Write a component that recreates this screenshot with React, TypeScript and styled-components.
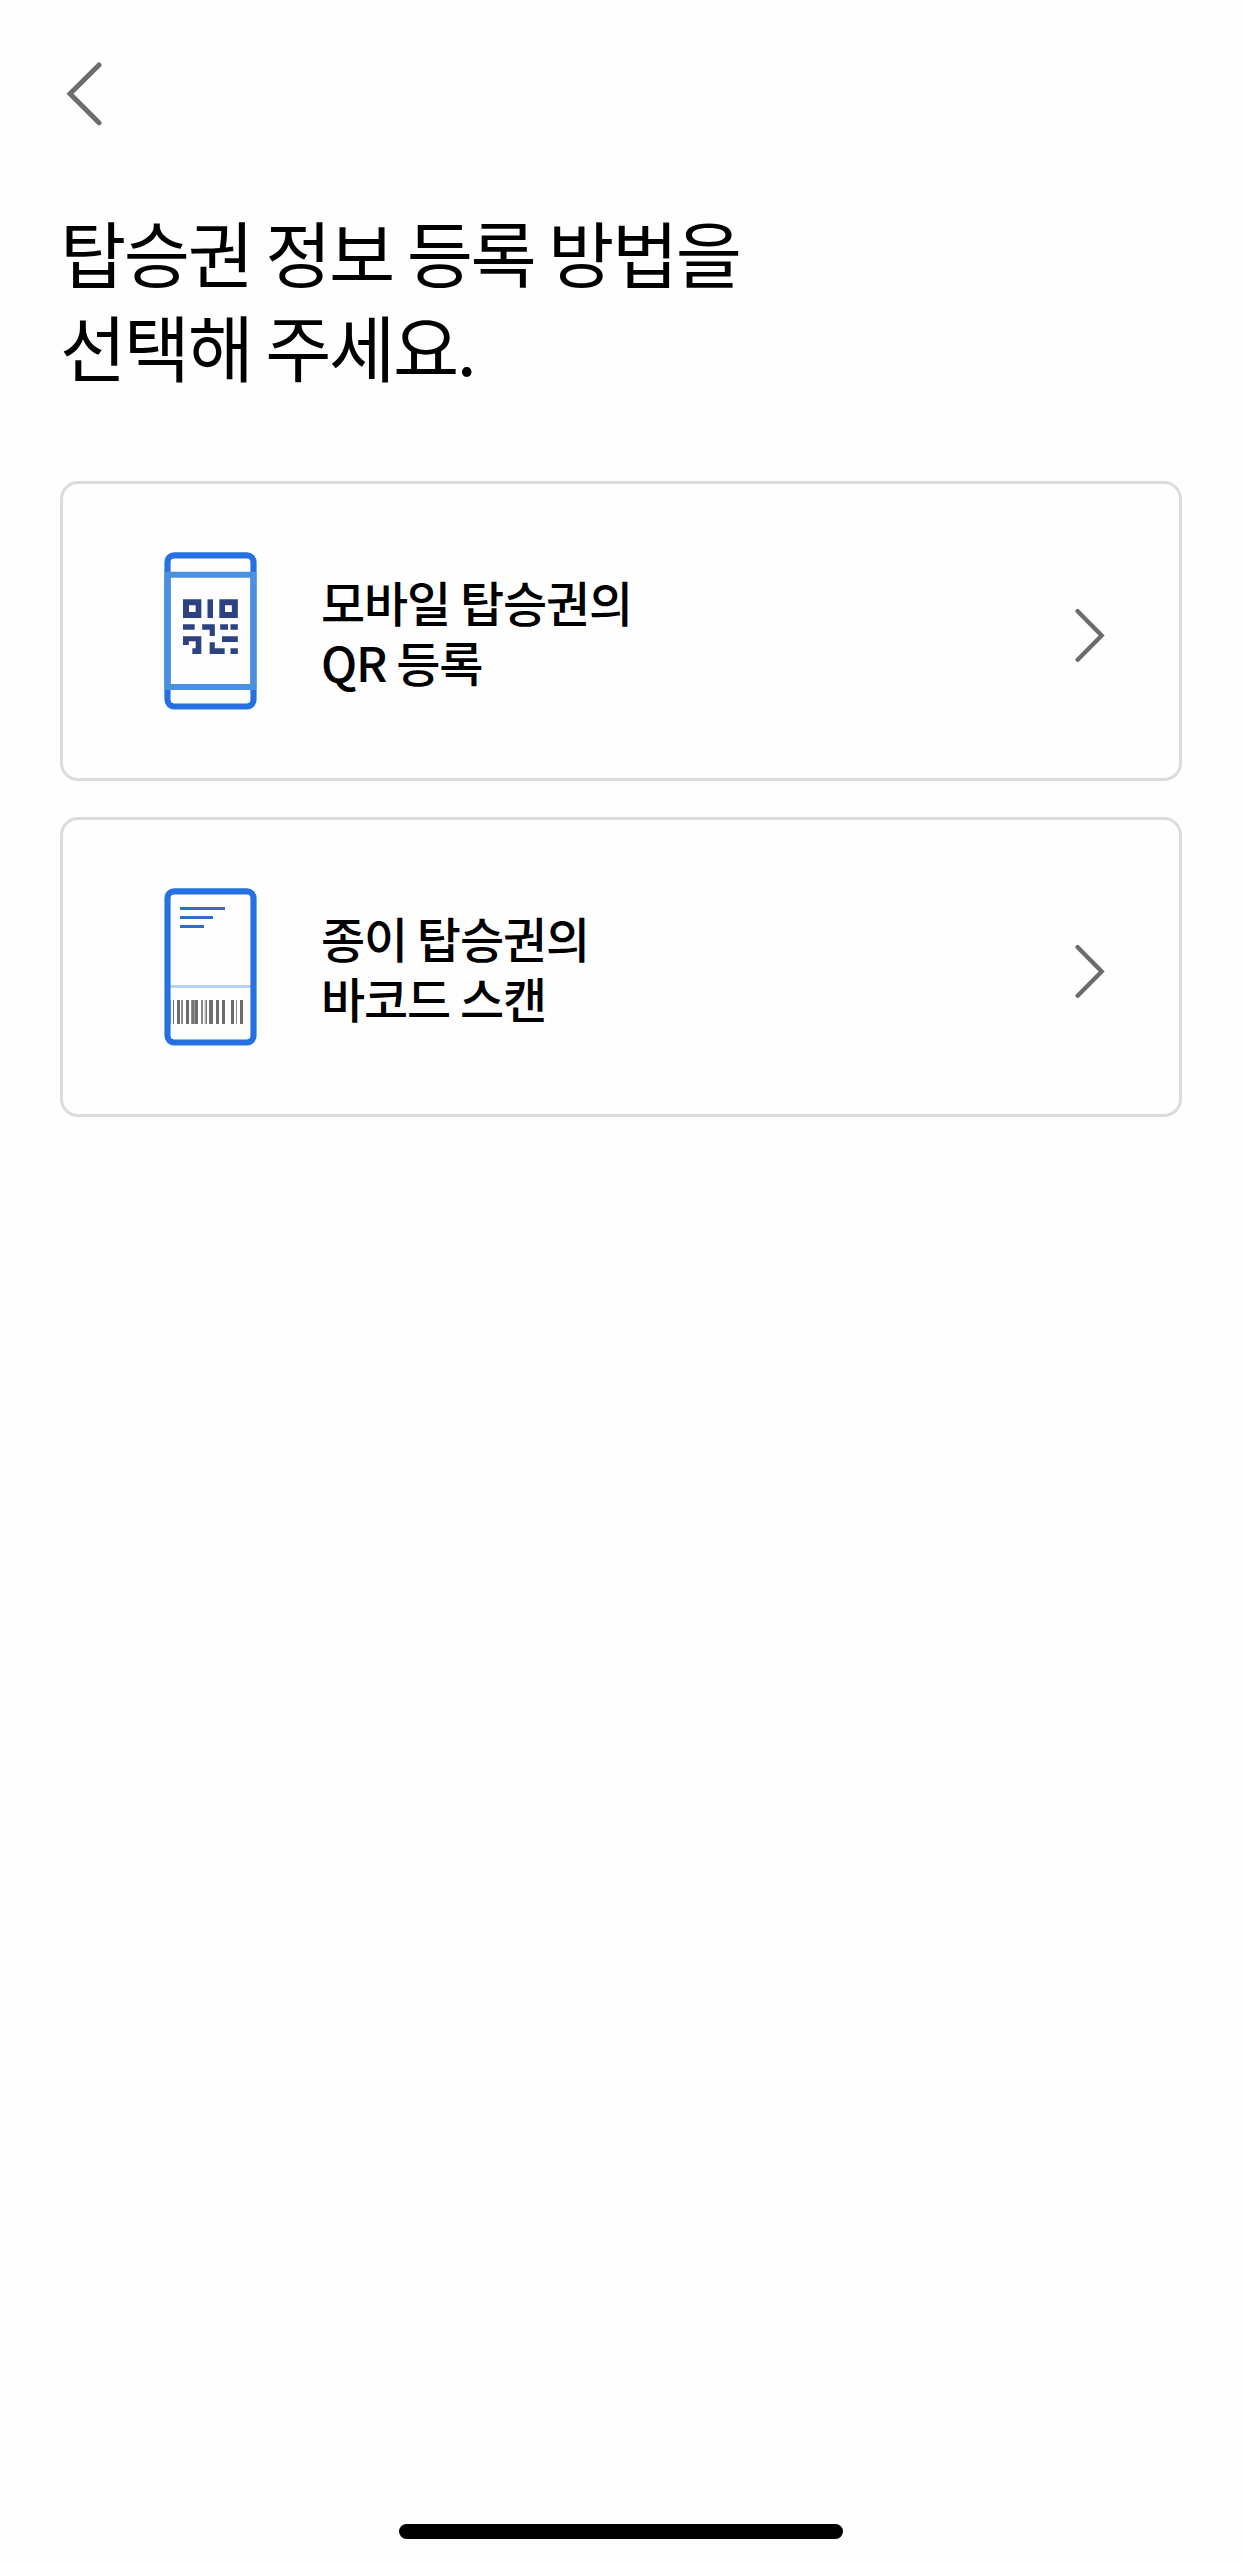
import React from 'react';
import styled, { createGlobalStyle } from 'styled-components';

const GlobalStyle = createGlobalStyle`
  *, *::before, *::after { box-sizing: border-box; }
  body {
    margin: 0;
    background: #fefefe;
    color: #000;
    font-family: "Noto Sans CJK KR", sans-serif;
  }
`;

const Screen = styled.div`
  display: flex;
  flex-direction: column;
  width: 1242px;
  height: 2563px;
  overflow: hidden;
`;

const NavBar = styled.header`
  display: flex;
  padding: 62px 66px 0;
  height: 204px;
`;

const BackButton = styled.button`
  display: block;
  width: 36px;
  height: 64px;
  padding: 0;
  border: 0;
  background: none;
  svg { display: block; }
`;

const Title = styled.h1`
  margin: 0 60px;
  height: 277px;
  font-size: 72px;
  font-weight: 400;
  line-height: 93.5px;
  letter-spacing: -2.4px;
`;

const OptionList = styled.main`
  display: flex;
  flex-direction: column;
  gap: 36px;
  margin: 0 60px;
`;

const OptionCard = styled.button`
  display: flex;
  align-items: center;
  width: 100%;
  height: 300px;
  padding: 0 74px 0 101px;
  border: 3px solid #dcdcdc;
  border-radius: 18px;
  background: #fefefe;
  color: inherit;
  font-family: inherit;
  text-align: left;
  svg { display: block; flex: none; }
`;

const OptionLabel = styled.span`
  flex: 1;
  margin-left: 64px;
  font-size: 48px;
  font-weight: 500;
  line-height: 60px;
  letter-spacing: -1.1px;
`;

const ChevronSlot = styled.span`
  padding-top: 8px;
`;

const HomeArea = styled.footer`
  display: flex;
  justify-content: center;
  margin-top: auto;
  padding-bottom: 24px;
`;

const HomeIndicator = styled.div`
  width: 444px;
  height: 15px;
  border-radius: 8px;
  background: #000;
`;

const BackIcon = () => (
  <svg width="36" height="64" viewBox="78 66 108 192" fill="none" stroke="#6b6d6e" strokeWidth="15" strokeLinecap="round">
    <path d="M177 75L90 161.500L177 248" />
  </svg>
);

const ForwardIcon = () => (
  <svg width="30" height="54" viewBox="105 84 90 162" fill="none" stroke="#696b6d" strokeWidth="13" strokeLinecap="round">
    <path d="M113 93.500L185 166.500L113 239" />
  </svg>
);

const MobilePassIcon = () => (
  <svg width="93" height="158" viewBox="42 36 279 474">
    <rect x="52.500" y="46" width="258" height="453.500" rx="20" fill="none" stroke="#2471df" strokeWidth="18.500" />
    <path fill="#4b8fdf" fillRule="evenodd" d="M43 95H319V450H43ZM62 113.500V432H301.500V113.500Z" />
    <g fill="#2e4181">
      <path fillRule="evenodd" d="M99 178H154V234H99ZM117 196V216H137V196Z" />
      <path d="M172.500 178H189V234H172.500Z" />
      <path fillRule="evenodd" d="M208 178H263.500V234H208ZM225 196V216H245.500V196Z" />
      <path d="M99 252.500H134V269.500H99ZM156.500 252.500H194.500V288H179V269.500H156.500ZM210.500 252.500H234V269.500H210.500ZM241.500 252.500H263.500V269.500H241.500Z" />
      <path d="M99 288.500H154V342H127V324.500H137V304H116.500V315H99ZM179 307H194.500V324.500H224V342H179ZM216 288.500H263.500V306H216ZM241.500 324.500H263.500V342H241.500Z" />
    </g>
  </svg>
);

const BARS: Array<[number, number, string]> = [
  [61, 2.5, '#777'],
  [69, 3, '#6e6e6e'],
  [81, 9, '#6c6c6c'],
  [93, 6, '#8c8c8c'],
  [108, 9, '#6c6c6c'],
  [123, 3, '#8c8c8c'],
  [126, 6, '#747474'],
  [132, 3, '#989898'],
  [135, 9, '#6c6c6c'],
  [153, 6, '#888'],
  [162, 3, '#dadada'],
  [165, 3, '#b0b0b0'],
  [168, 3, '#777'],
  [177, 12, '#707070'],
  [198, 9, '#6c6c6c'],
  [216, 9, '#6c6c6c'],
  [243, 9, '#6c6c6c'],
  [258, 3, '#909090'],
  [270, 9, '#6c6c6c'],
];

const PaperPassIcon = () => (
  <svg width="93" height="158" viewBox="42 36 279 474">
    <path fill="#b9d1f2" d="M60 327H304V336H60Z" />
    <g>
      {BARS.map(([x, w, fill]) => (
        <rect key={x} x={x} y="372" width={w} height="72" fill={fill} />
      ))}
    </g>
    <path fill="#2d6cd0" d="M90 93H225V102H90ZM90 120H189V129H90ZM90 147H162V156H90Z" />
    <rect x="52.500" y="46" width="258" height="453.500" rx="20" fill="none" stroke="#2471df" strokeWidth="18.500" />
  </svg>
);

interface OptionProps {
  icon: React.ReactNode;
  lines: [string, string];
}

const Option = ({ icon, lines }: OptionProps) => (
  <OptionCard type="button">
    {icon}
    <OptionLabel>
      {lines[0]}
      <br />
      {lines[1]}
    </OptionLabel>
    <ChevronSlot>
      <ForwardIcon />
    </ChevronSlot>
  </OptionCard>
);

export default function App() {
  return (
    <>
      <GlobalStyle />
      <Screen>
        <NavBar>
          <BackButton type="button">
            <BackIcon />
          </BackButton>
        </NavBar>
        <Title>
          탑승권 정보 등록 방법을
          <br />
          선택해 주세요.
        </Title>
        <OptionList>
          <Option icon={<MobilePassIcon />} lines={['모바일 탑승권의', 'QR 등록']} />
          <Option icon={<PaperPassIcon />} lines={['종이 탑승권의', '바코드 스캔']} />
        </OptionList>
        <HomeArea>
          <HomeIndicator />
        </HomeArea>
      </Screen>
    </>
  );
}
